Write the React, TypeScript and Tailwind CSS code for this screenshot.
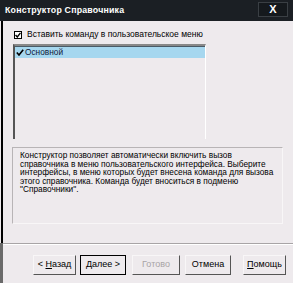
import React from "react";

const font = { fontFamily: '"Liberation Sans", Arial, sans-serif' };

function Btn({ children, def, disabled, w }: { children: React.ReactNode; def?: boolean; disabled?: boolean; w: string }) {
  return (
    <div
      className={`${w} h-[20px] flex items-center justify-center text-[9px] bg-[#eeeaed] ${
        def ? "border border-black" : "border border-[#f8f6f7] border-r-[#555] border-b-[#555]"
      } ${disabled ? "text-[#a8a4a6]" : "text-black"}`}
    >
      {children}
    </div>
  );
}

export default function App() {
  return (
    <div className="w-[293px] h-[283px] bg-[#eeeaed] flex flex-col overflow-hidden" style={font}>
      <div className="h-[21px] bg-[#1b1f24] flex items-center justify-between pl-[5px] pr-[5px]">
        <span className="text-white font-bold text-[8.8px] tracking-[0.2px]">Конструктор Справочника</span>
        <div className="w-[30px] h-[15px] bg-[#15191d] border border-[#3a3f44] flex items-center justify-center mt-[-3px]">
          <span className="text-white font-bold text-[11px] leading-none">X</span>
        </div>
      </div>
      <div className="flex flex-1">
        <div className="w-[3px] flex flex-col">
          <div className="h-[222px] border-l-[1px] border-[#eeeaed] bg-black w-[3px]" />
          <div className="flex-1 bg-[#6a6a6a]" />
        </div>
        <div className="flex-1 flex flex-col">
          <div className="flex items-center pl-[11px] mt-[9px] h-[9px]">
            <div className="w-[8px] h-[8px] border border-black bg-white flex items-center justify-center">
              <svg width="6" height="6" viewBox="0 0 6 6">
                <path d="M0.5 3 L2.3 5 L5.5 0.8" stroke="black" strokeWidth="1.4" fill="none" />
              </svg>
            </div>
            <span className="ml-[5px] text-[8.5px] text-black">Вставить команду в пользовательское меню</span>
          </div>
          <div className="ml-[10px] mt-[5px] w-[193px] h-[95px] border-l-2 border-t-2 border-l-[#555] border-t-[#888] border-r border-r-white bg-[#eeeaed]">
            <div className="h-[12px] bg-[#a6d7ef] border-t border-[#4a5a66] flex items-center pl-[1px]">
              <svg width="8" height="7" viewBox="0 0 8 7">
                <path d="M0.8 3.5 L3 6 L7.2 0.8" stroke="black" strokeWidth="1.6" fill="none" />
              </svg>
              <span className="text-[8.3px] text-[#10203a] ml-[1px]">Основной</span>
            </div>
          </div>
          <div className="ml-[9px] mt-[8px] w-[271px] h-[77px] border border-[#b8b4b6] border-r-[#f8f6f7] border-b-[#f8f6f7] pl-[7px] pr-[4px] pt-[3px] text-[8.3px] leading-[8.6px] text-black">
            Конструктор позволяет автоматически включить вызов справочника в меню пользовательского интерфейса. Выберите интерфейсы, в меню которых будет внесена команда для вызова этого справочника. Команда будет вноситься в подменю "Справочники".
          </div>
          <div className="mt-[19px] h-[2px] border-t border-[#a8a4a6] border-b border-b-white" />
          <div className="flex mt-[10px] pl-[30px]">
            <Btn w="w-[43px]"><span>&lt; <u>Н</u>азад</span></Btn>
            <div className="w-[4px]" />
            <Btn w="w-[46px]" def><span><u>Д</u>алее &gt;</span></Btn>
            <div className="w-[6px]" />
            <Btn w="w-[48px]" disabled><span>Готово</span></Btn>
            <div className="w-[5px]" />
            <Btn w="w-[46px]"><span>Отмена</span></Btn>
            <div className="w-[12px]" />
            <Btn w="w-[43px]"><span><u>П</u>омощь</span></Btn>
          </div>
        </div>
      </div>
    </div>
  );
}
